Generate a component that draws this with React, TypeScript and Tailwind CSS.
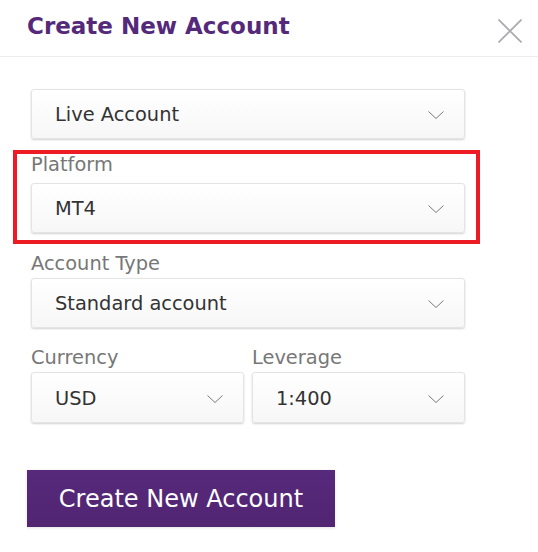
type SelectBoxProps = {
  value: string;
  className?: string;
};

function Chevron() {
  return (
    <svg className="h-[8px] w-[16px] shrink-0" viewBox="0 0 16 8" fill="none">
      <path d="M0.5 0.5 L8 7.5 L15.5 0.5" stroke="#7a7a7a" strokeWidth="1" />
    </svg>
  );
}

function CloseIcon() {
  return (
    <svg className="mt-[19px] size-[24px]" viewBox="0 0 24 24" fill="none">
      <path d="M0.5 0.5 L23.5 23.5 M23.5 0.5 L0.5 23.5" stroke="#a9a9ae" strokeWidth="1.6" />
    </svg>
  );
}

function SelectBox({ value, className }: SelectBoxProps) {
  return (
    <div
      className={`flex h-[50px] items-center justify-between rounded-[3px] border border-[#e4e4e4] bg-gradient-to-b from-white to-[#f7f7f7] pl-[23px] pr-[20px] pt-[2px] text-[19.4px] text-[#333] shadow-[0_1px_2px_rgba(0,0,0,0.18)] ${className ?? ""}`}
    >
      <span>{value}</span>
      <Chevron />
    </div>
  );
}

function FieldLabel({ children }: { children: string }) {
  return <div className="h-[20px] text-[19.4px] leading-[25px] text-[#777]">{children}</div>;
}

export default function App() {
  return (
    <div className="h-[552px] w-[538px] overflow-hidden bg-white font-['DejaVu_Sans',Verdana,sans-serif]">
      <header className="flex h-[57px] items-start justify-between border-b border-[#ececec] pl-[27px] pr-[16px]">
        <h1 className="pt-[12px] text-[23px] font-bold leading-[28px] text-[#55297a]">Create New Account</h1>
        <CloseIcon />
      </header>

      <div className="pt-[32px]">
        <SelectBox value="Live Account" className="ml-[31px] w-[434px]" />

        <div className="ml-[13px] mt-[11px] w-[467px] border-4 border-[#ed1c24] pb-[7px] pl-[14px] pr-[11px]">
          <div className="-mt-[2px]">
            <FieldLabel>Platform</FieldLabel>
          </div>
          <SelectBox value="MT4" className="mt-[11px]" />
        </div>

        <div className="ml-[31px] w-[434px]">
          <div className="mt-[7px]">
            <FieldLabel>Account Type</FieldLabel>
          </div>
          <SelectBox value="Standard account" className="mt-[7px]" />

          <div className="mt-[17px] grid grid-cols-2 gap-[8px]">
            <div>
              <FieldLabel>Currency</FieldLabel>
              <SelectBox value="USD" className="mt-[7px] h-[51px]" />
            </div>
            <div>
              <FieldLabel>Leverage</FieldLabel>
              <SelectBox value="1:400" className="mt-[7px] h-[51px]" />
            </div>
          </div>
        </div>

        <button
          type="button"
          className="ml-[27px] mt-[47px] h-[57px] w-[308px] bg-gradient-to-b from-[#56297b] to-[#512572] text-[24px] text-white shadow-[0_1px_3px_rgba(0,0,0,0.12)]"
        >
          Create New Account
        </button>
      </div>
    </div>
  );
}
